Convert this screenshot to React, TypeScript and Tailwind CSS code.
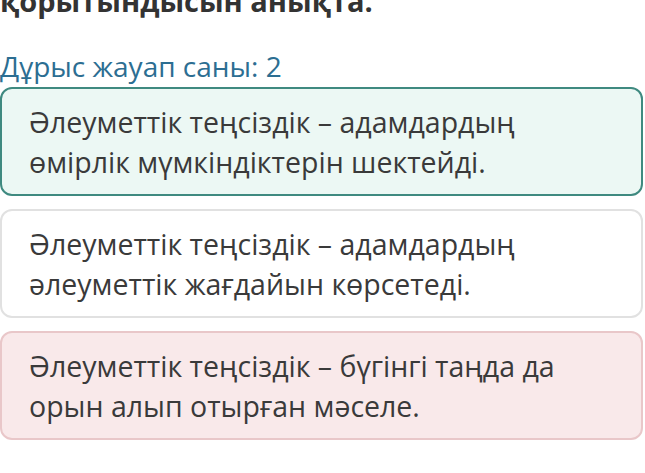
const OPTIONS = [
  {
    text: 'Әлеуметтік теңсіздік – адамдардың өмірлік мүмкіндіктерін шектейді.',
    box: 'border-[#3f8a80] bg-[#ecf8f4]',
  },
  {
    text: 'Әлеуметтік теңсіздік – адамдардың әлеуметтік жағдайын көрсетеді.',
    box: 'border-[#e1e1e1] bg-white',
  },
  {
    text: 'Әлеуметтік теңсіздік – бүгінгі таңда да орын алып отырған мәселе.',
    box: 'border-[#e9c7c9] bg-[#f9e9ea]',
  },
]

export default function App() {
  return (
    <div className="w-[645px] h-[473px] overflow-hidden bg-white font-['Open_Sans',sans-serif] text-[#3a3a3a]">
      {/* Question tail, cut off at the top */}
      <h1 className="-mt-[19px] text-[29px] leading-[40px] font-bold text-[#333]">
        қорытындысын анықта.
      </h1>

      <p className="mt-[27px] text-[28px] leading-[36px] text-[#2c6e92]">Дұрыс жауап саны: 2</p>

      <div className="mt-[3px] mr-[2px] flex flex-col gap-[13px]">
        {OPTIONS.map((o, i) => (
          <div
            key={i}
            className={`h-[109px] rounded-[12px] border-2 px-[27px] flex items-center ${o.box}`}
          >
            <p className="max-w-[530px] text-[28.5px] leading-[40px]">{o.text}</p>
          </div>
        ))}
      </div>
    </div>
  )
}
